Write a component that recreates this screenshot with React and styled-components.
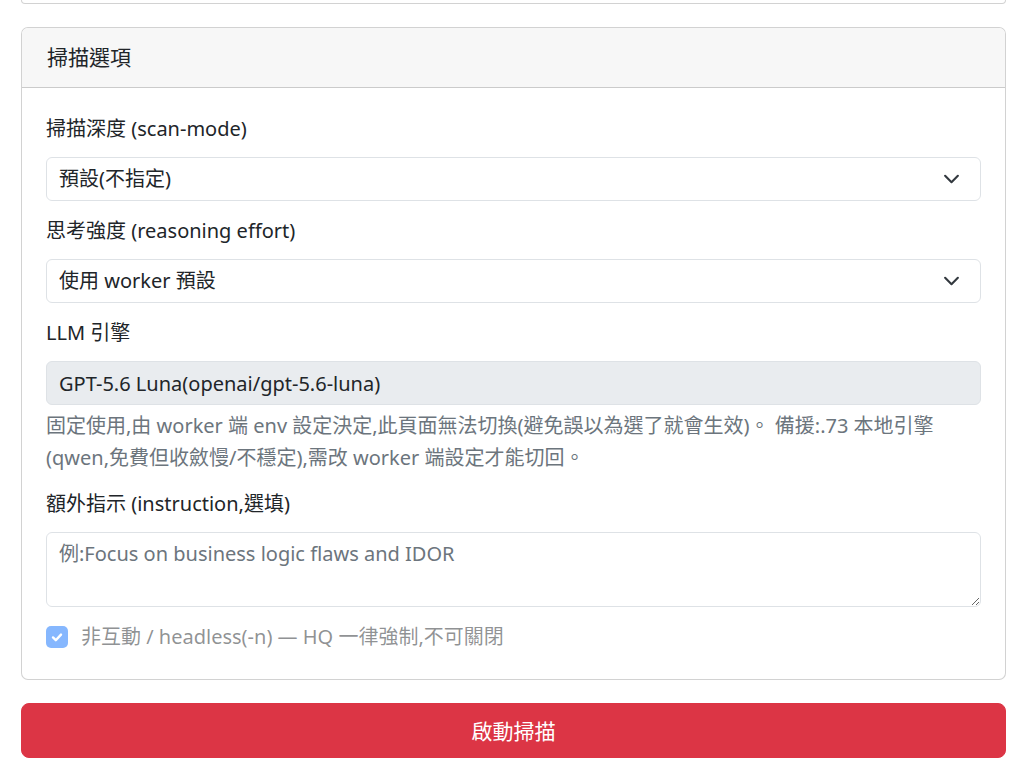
import React from "react";
import styled, { createGlobalStyle } from "styled-components";

const GlobalStyle = createGlobalStyle`
  *, *::before, *::after { box-sizing: border-box; }
  html, body { margin: 0; padding: 0; background: #fff; }
  body {
    font-family: "Segoe UI", "Noto Sans", "Noto Sans CJK TC", sans-serif;
    font-size: 20px;
    line-height: 1.5;
    color: #212529;
  }
`;

const Page = styled.div`
  width: 985px;
  margin: 0 0 0 21px;
  display: flex;
  flex-direction: column;
`;

/* tail of the card above, scrolled mostly out of view */
const CardTail = styled.div`
  height: 4px;
  border: 1px solid rgba(0, 0, 0, 0.175);
  border-top: none;
  border-radius: 0 0 6px 6px;
  margin-bottom: 23px;
`;

const Card = styled.section`
  border: 1px solid rgba(0, 0, 0, 0.175);
  border-radius: 7px;
  background: #fff;
  overflow: hidden;
`;

const CardHeader = styled.header`
  background: #f7f7f7;
  border-bottom: 1px solid rgba(0, 0, 0, 0.175);
  padding: 17px 24px 17px 25px;
  font-size: 21px;
  line-height: 25px;
  font-weight: 400;
`;

const CardBody = styled.div`
  padding: 26px 24px 27px;
  display: flex;
  flex-direction: column;
  gap: 15px;
`;

const Field = styled.div`
  display: flex;
  flex-direction: column;
`;

const Label = styled.label`
  display: block;
  line-height: 30px;
  margin-bottom: 13px;
`;

const baseControl = `
  width: 100%;
  font: inherit;
  font-size: 20px;
  line-height: 30px;
  color: #212529;
  border: 1px solid #dee2e6;
  border-radius: 6px;
  padding: 6px 12px;
  outline: none;
`;

const SelectWrap = styled.div`
  position: relative;
`;

const Select = styled.select`
  ${baseControl}
  appearance: none;
  background: #fff;
  padding-right: 48px;
  height: 44px;
`;

const Chevron = styled.svg`
  position: absolute;
  right: 21px;
  top: 50%;
  width: 17px;
  height: 13px;
  transform: translateY(-50%);
  pointer-events: none;
`;

const Input = styled.input`
  ${baseControl}
  height: 44px;
  background: ${(p) => (p.readOnly ? "#e9ecef" : "#fff")};
`;

const Help = styled.div`
  margin-top: 5px;
  color: #6c757d;
  line-height: 32px;
`;

const TextArea = styled.textarea`
  ${baseControl}
  height: 75px;
  resize: vertical;
  display: block;
  &::placeholder { color: #6c757d; opacity: 1; }
`;

const Check = styled.label`
  display: flex;
  align-items: center;
  gap: 13px;
  line-height: 30px;
  color: rgba(33, 37, 41, 0.5);
`;

const CheckBox = styled.span`
  width: 22px;
  height: 22px;
  border-radius: 5px;
  background: #86b7fe;
  display: inline-flex;
  align-items: center;
  justify-content: center;
  flex: none;
`;

const SubmitButton = styled.button`
  margin-top: 23px;
  width: 100%;
  height: 55px;
  border: 1px solid #dc3545;
  border-radius: 8px;
  background: #dc3545;
  color: #fff;
  font: inherit;
  font-size: 21px;
  line-height: 30px;
  cursor: pointer;
`;

function ChevronIcon() {
  return (
    <Chevron viewBox="0 0 16 12" aria-hidden="true">
      <path
        d="M2 3l6 6 6-6"
        fill="none"
        stroke="#343a40"
        strokeWidth="2"
        strokeLinecap="round"
        strokeLinejoin="round"
      />
    </Chevron>
  );
}

function SelectField({ label, id, options }) {
  return (
    <Field>
      <Label htmlFor={id}>{label}</Label>
      <SelectWrap>
        <Select id={id} defaultValue={options[0]}>
          {options.map((o) => (
            <option key={o}>{o}</option>
          ))}
        </Select>
        <ChevronIcon />
      </SelectWrap>
    </Field>
  );
}

export default function App() {
  return (
    <>
      <GlobalStyle />
      <Page>
        <CardTail />
        <Card>
          <CardHeader>掃描選項</CardHeader>
          <CardBody>
            <SelectField
              id="scan-mode"
              label="掃描深度 (scan-mode)"
              options={["預設(不指定)", "quick", "deep"]}
            />
            <SelectField
              id="effort"
              label="思考強度 (reasoning effort)"
              options={["使用 worker 預設", "low", "medium", "high"]}
            />
            <Field>
              <Label htmlFor="engine">LLM 引擎</Label>
              <Input
                id="engine"
                readOnly
                value="GPT-5.6 Luna(openai/gpt-5.6-luna)"
              />
              <Help>
                固定使用,由 worker 端 env 設定決定,此頁面無法切換(避免誤以為選了就會生效)。 備援:.73 本地引擎
                (qwen,免費但收斂慢/不穩定),需改 worker 端設定才能切回。
              </Help>
            </Field>
            <Field>
              <Label htmlFor="instruction">額外指示 (instruction,選填)</Label>
              <TextArea
                id="instruction"
                rows={2}
                placeholder="例:Focus on business logic flaws and IDOR"
              />
            </Field>
            <Check>
              <CheckBox>
                <svg width="16" height="16" viewBox="0 0 20 20" aria-hidden="true">
                  <path
                    d="M5 10.5l3.5 3.5 6.5-7"
                    fill="none"
                    stroke="#fff"
                    strokeWidth="3"
                    strokeLinecap="round"
                    strokeLinejoin="round"
                  />
                </svg>
              </CheckBox>
              非互動 / headless(-n) — HQ 一律強制,不可關閉
            </Check>
          </CardBody>
        </Card>
        <SubmitButton type="button">啟動掃描</SubmitButton>
      </Page>
    </>
  );
}
